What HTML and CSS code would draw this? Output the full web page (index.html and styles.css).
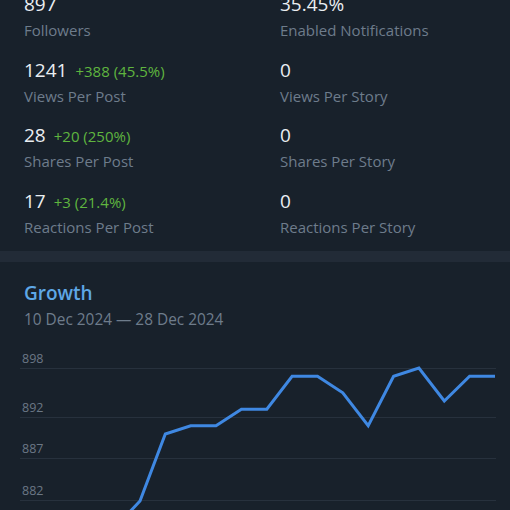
FILE: index.html
```html
<!DOCTYPE html>
<html lang="en">
<head>
<meta charset="utf-8">
<title>Statistics</title>
<link rel="stylesheet" href="styles.css">
</head>
<body>
<section class="stats">
  <div class="stat">
    <div class="value"><span class="num">897</span></div>
    <div class="label">Followers</div>
  </div>
  <div class="stat">
    <div class="value"><span class="num">35.45%</span></div>
    <div class="label">Enabled Notifications</div>
  </div>
  <div class="stat">
    <div class="value"><span class="num">1241</span><span class="delta">+388 (45.5%)</span></div>
    <div class="label">Views Per Post</div>
  </div>
  <div class="stat">
    <div class="value"><span class="num">0</span></div>
    <div class="label">Views Per Story</div>
  </div>
  <div class="stat">
    <div class="value"><span class="num">28</span><span class="delta">+20 (250%)</span></div>
    <div class="label">Shares Per Post</div>
  </div>
  <div class="stat">
    <div class="value"><span class="num">0</span></div>
    <div class="label">Shares Per Story</div>
  </div>
  <div class="stat">
    <div class="value"><span class="num">17</span><span class="delta">+3 (21.4%)</span></div>
    <div class="label">Reactions Per Post</div>
  </div>
  <div class="stat">
    <div class="value"><span class="num">0</span></div>
    <div class="label">Reactions Per Story</div>
  </div>
</section>
<div class="divider"></div>
<section class="growth">
  <h2 class="title">Growth</h2>
  <div class="range">10 Dec 2024 — 28 Dec 2024</div>
  <svg class="chart" width="510" height="170" viewBox="0 0 510 170">
    <g class="grid">
      <line x1="20" y1="28.5" x2="496" y2="28.5"/>
      <line x1="20" y1="77.5" x2="496" y2="77.5"/>
      <line x1="20" y1="118.5" x2="496" y2="118.5"/>
      <line x1="20" y1="160.5" x2="496" y2="160.5"/>
    </g>
    <g class="axis">
      <text x="22" y="23">898</text>
      <text x="22" y="72">892</text>
      <text x="22" y="113">887</text>
      <text x="22" y="155">882</text>
    </g>
    <polyline class="line" points="38.5,230 63.9,215 89.2,200 114.6,188 140,161 165.3,94 190.7,85.75 216,85.75 241.4,69.25 266.8,69.25 292.1,36.25 317.5,36.25 342.8,52.75 368.2,85.75 393.6,36.25 418.9,28 444.3,61 469.6,36.25 495,36.25"/>
  </svg>
</section>
</body>
</html>
```

FILE: styles.css
```css
html, body {
  margin: 0;
  padding: 0;
  background: #18212b;
  overflow: hidden;
}
body {
  width: 510px;
  height: 510px;
  font-family: "Open Sans", "Noto Sans", sans-serif;
}
.stats {
  display: grid;
  grid-template-columns: 256px 1fr;
  row-gap: 17.5px;
  padding: 0 24px 14.5px 24px;
  margin-top: -8px;
}
.stat {
  height: 48px;
}
.value {
  height: 24px;
  line-height: 24px;
  white-space: nowrap;
}
.num {
  font-size: 19px;
  color: #eaeef2;
}
.delta {
  font-size: 15px;
  color: #5fb53f;
  margin-left: 8px;
}
.label {
  margin-top: 4px;
  font-size: 15px;
  line-height: 20px;
  color: #6e7c8b;
  white-space: nowrap;
}
.divider {
  height: 11px;
  background: #222b37;
}
.growth {
  padding-top: 19px;
}
.title {
  margin: 0 0 0 24px;
  font-size: 19px;
  line-height: 24px;
  font-weight: 600;
  color: #5ea7e6;
}
.range {
  margin: 5px 0 0 24px;
  font-size: 15.4px;
  line-height: 20px;
  color: #6e7c8b;
}
.chart {
  display: block;
  margin-top: 10px;
  overflow: hidden;
}
.grid line {
  stroke: #27313d;
  stroke-width: 1;
}
.axis text {
  font-family: "Open Sans", "Noto Sans", sans-serif;
  font-size: 12.5px;
  fill: #6b7785;
}
.line {
  fill: none;
  stroke: #3f88e2;
  stroke-width: 3;
  stroke-linejoin: miter;
}
```
